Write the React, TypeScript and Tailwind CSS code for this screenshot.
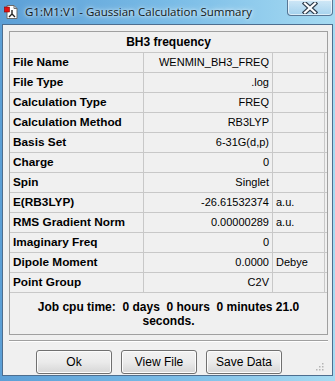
import React from 'react';

const rows: { label: string; value: string; unit?: string }[] = [
  { label: 'File Name', value: 'WENMIN_BH3_FREQ' },
  { label: 'File Type', value: '.log' },
  { label: 'Calculation Type', value: 'FREQ' },
  { label: 'Calculation Method', value: 'RB3LYP' },
  { label: 'Basis Set', value: '6-31G(d,p)' },
  { label: 'Charge', value: '0' },
  { label: 'Spin', value: 'Singlet' },
  { label: 'E(RB3LYP)', value: '-26.61532374', unit: 'a.u.' },
  { label: 'RMS Gradient Norm', value: '0.00000289', unit: 'a.u.' },
  { label: 'Imaginary Freq', value: '0' },
  { label: 'Dipole Moment', value: '0.0000', unit: 'Debye' },
  { label: 'Point Group', value: 'C2V' },
];

function AppIcon() {
  return (
    <svg width="16" height="16" viewBox="0 0 16 16">
      <path d="M3 1.5h7l3 3v10H3z" fill="#fff" stroke="#6b6b6b" strokeWidth="1" />
      <path d="M10 1.5v3h3" fill="none" stroke="#6b6b6b" strokeWidth="1" />
      <path d="M8 6v4M8 10l-3 3M8 10l3 3" stroke="#222" strokeWidth="1.4" fill="none" />
      <rect x="0.5" y="3" width="5" height="5" fill="#e41010" stroke="#8a0000" strokeWidth="0.6" />
    </svg>
  );
}

function Btn({ children }: { children: React.ReactNode }) {
  return (
    <button className="h-[24px] w-[76px] rounded-[3px] border border-[#707070] bg-gradient-to-b from-[#f2f2f2] via-[#ebebeb] to-[#d6d6d6] text-[12px] text-black shadow-[inset_0_0_0_1px_#fcfcfc]">
      {children}
    </button>
  );
}

export default function App() {
  return (
    <div
      className="relative h-[381px] w-[335px] overflow-hidden bg-gradient-to-r from-[#5c9fd6] via-[#79bbe6] to-[#a6dbf2]"
      style={{ fontFamily: '"Liberation Sans", Arial, sans-serif' }}
    >
      {/* title bar */}
      <div className="flex h-[24px] items-center pl-[4px]">
        <AppIcon />
        <span
          className="ml-[5px] text-[11.5px] text-[#101820]"
          style={{ fontFamily: '"Open Sans", sans-serif', textShadow: '0 0 6px #e8f4fc, 0 0 3px #e8f4fc' }}
        >
          G1:M1:V1 - Gaussian Calculation Summary
        </span>
      </div>
      <div className="absolute right-[2px] top-[-1px] flex h-[17px] w-[46px] items-center justify-center rounded-b-[4px] border border-[#3d5d7d]/80 bg-gradient-to-b from-[#dcecf8]/80 to-[#a9d0ec]/60 shadow-[inset_0_0_0_1px_rgba(255,255,255,0.6)]">
        <svg width="16" height="12" viewBox="0 0 16 12">
          <path d="M3 1.5l10 9M13 1.5L3 10.5" stroke="#2f3d4c" strokeWidth="4.5" strokeLinecap="square" />
          <path d="M3 1.5l10 9M13 1.5L3 10.5" stroke="#fff" strokeWidth="2.2" strokeLinecap="square" />
        </svg>
      </div>

      {/* client area */}
      <div className="ml-[2px] h-[352px] w-[331px] border border-[#4d6e8f] bg-[#f0f0f0] pt-[6px] pl-[6px]">
        <div className="w-[319px] border border-[#a0a0a0] bg-[#f0f0f0]">
          <div className="flex h-[21px] items-center justify-center border-b border-[#c8c8c8] text-[12px] font-bold text-black">
            BH3 frequency
          </div>
          {rows.map(r => (
            <div key={r.label} className="flex h-[20px] border-b border-[#c8c8c8] text-[11px] text-black">
              <div className="flex w-[134px] items-center border-r border-[#c8c8c8] pl-[3px] text-[11.8px] font-bold">{r.label}</div>
              <div className="flex w-[129px] items-center justify-end border-r border-[#c8c8c8] pr-[3px]">{r.value}</div>
              <div className="flex w-[52px] items-center border-r border-[#c8c8c8] pl-[3px]">{r.unit}</div>
            </div>
          ))}
          <div className="flex h-[41px] flex-col items-center justify-center text-center text-[12px] font-bold leading-[14px] text-black whitespace-pre">
            <span>Job cpu time:  0 days  0 hours  0 minutes 21.0</span>
            <span>seconds.</span>
          </div>
        </div>
        <div className="mt-[5px] h-[2px] w-[319px] border-t border-[#a0a0a0] border-b border-b-white" />
        <div className="mt-[8px] flex gap-[9px] pl-[27px]">
          <Btn>Ok</Btn>
          <Btn>View File</Btn>
          <Btn>Save Data</Btn>
        </div>
        <div className="relative">
          <svg className="absolute right-[8px] top-[-12px]" width="9" height="9" viewBox="0 0 9 9">
            {[
              [7, 1], [4, 4], [7, 4], [1, 7], [4, 7], [7, 7],
            ].map(([x, y]) => (
              <rect key={`${x}-${y}`} x={x} y={y} width="1.5" height="1.5" fill="#b5b5b5" />
            ))}
          </svg>
        </div>
      </div>
    </div>
  );
}
